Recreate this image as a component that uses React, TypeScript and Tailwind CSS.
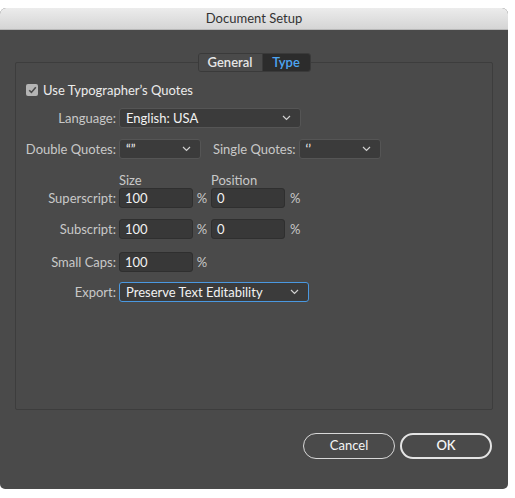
import React from "react";

function Chevron() {
  return (
    <svg width="9" height="6" viewBox="0 0 9 6" className="shrink-0">
      <path d="M1 1l3.5 3.5L8 1" stroke="#d0d0d0" fill="none" strokeWidth="1.2" />
    </svg>
  );
}

function Select({
  value,
  className,
  focused,
}: {
  value: string;
  className: string;
  focused?: boolean;
}) {
  return (
    <div
      className={`flex h-[20px] items-center justify-between rounded-[3px] border bg-[#3b3b3b] pl-[6px] pr-[9px] text-[13px] text-[#f2f2f2] ${
        focused ? "border-[#4a98e0]" : "border-[#555555]"
      } ${className}`}
    >
      <span>{value}</span>
      <Chevron />
    </div>
  );
}

function Field({ value }: { value: string }) {
  return (
    <div className="flex h-[20px] w-[74px] items-center rounded-[3px] border border-[#2f2f2f] bg-[#383838] pl-[5px] text-[13px] text-[#f2f2f2]">
      {value}
    </div>
  );
}

function Label({ children }: { children: React.ReactNode }) {
  return <div className="w-[100px] shrink-0 text-right text-[13px] text-[#c8c8c8]">{children}</div>;
}

function Pct({ className = "" }: { className?: string }) {
  return <span className={`text-[13px] text-[#c8c8c8] ${className}`}>%</span>;
}

export default function App() {
  return (
    <div className="h-[498px] w-[515px] bg-white pt-[8px] font-[Lato,'Open_Sans',sans-serif]">
      <div className="flex h-[481px] w-[508px] flex-col overflow-hidden rounded-t-[6px] rounded-b-[5px] bg-[#4a4a4a]">
        <div className="flex h-[22px] items-center justify-center border-b border-[#b8b8b8] bg-gradient-to-b from-[#ececec] to-[#d5d5d5] text-[13px] text-[#333333]">
          Document Setup
        </div>

        <div className="relative z-10 mt-[23px] flex justify-center">
          <div className="flex h-[19px] overflow-hidden rounded-[3px] border border-[#3a3a3a] text-[13px]">
            <div className="flex w-[64px] items-center justify-center border-r border-[#3a3a3a] bg-[#4a4a4a] font-semibold text-[#e6e6e6]">
              General
            </div>
            <div className="flex w-[47px] items-center justify-center bg-[#2c2c2c] font-semibold text-[#4da6f2]">
              Type
            </div>
          </div>
        </div>

        <div className="mx-[15px] -mt-[10px] h-[348px] rounded-[2px] border border-[#3d3d3d] pt-[17px] leading-[20px]">
          <div className="flex h-[20px] items-center gap-[5px] pl-[10px] text-[13px] text-[#ececec]">
            <div className="flex h-[12px] w-[12px] items-center justify-center rounded-[2px] bg-[#b4b4b4]">
              <svg width="9" height="8" viewBox="0 0 9 8">
                <path d="M1.2 4.2l2.2 2.2L7.8 1.2" stroke="#4a4a4a" strokeWidth="1.6" fill="none" />
              </svg>
            </div>
            <span>Use Typographer’s Quotes</span>
          </div>

          <div className="mt-[8px] flex h-[20px] items-center gap-[3px]">
            <Label>Language:</Label>
            <Select value="English: USA" className="w-[182px]" />
          </div>

          <div className="mt-[11px] flex h-[20px] items-center gap-[3px]">
            <Label>Double Quotes:</Label>
            <Select value="“”" className="w-[82px]" />
            <div className="ml-[9px] text-[13px] text-[#c8c8c8]">Single Quotes:</div>
            <Select value="‘’" className="w-[82px]" />
          </div>

          <div className="mt-[13px] flex h-[16px] items-center text-[13px] text-[#c8c8c8]">
            <div className="ml-[103px] w-[92px]">Size</div>
            <div>Position</div>
          </div>

          <div className="flex h-[20px] items-center gap-[3px]">
            <Label>Superscript:</Label>
            <Field value="100" />
            <Pct className="w-[12px] text-center" />
            <Field value="0" />
            <Pct className="ml-[2px]" />
          </div>

          <div className="mt-[11px] flex h-[20px] items-center gap-[3px]">
            <Label>Subscript:</Label>
            <Field value="100" />
            <Pct className="w-[12px] text-center" />
            <Field value="0" />
            <Pct className="ml-[2px]" />
          </div>

          <div className="mt-[13px] flex h-[20px] items-center gap-[3px]">
            <Label>Small Caps:</Label>
            <Field value="100" />
            <Pct className="w-[12px] text-center" />
          </div>

          <div className="mt-[10px] flex h-[20px] items-center gap-[3px]">
            <Label>Export:</Label>
            <Select value="Preserve Text Editability" className="w-[190px]" focused />
          </div>
        </div>

        <div className="mr-[16px] mt-[23px] flex justify-end gap-[5px] text-[13px] text-[#f5f5f5]">
          <button className="flex h-[26px] w-[92px] items-center justify-center rounded-full border border-[#d8d8d8]">
            Cancel
          </button>
          <button className="flex h-[26px] w-[92px] items-center justify-center rounded-full border-2 border-[#e4e4e4] font-semibold">
            OK
          </button>
        </div>
      </div>
    </div>
  );
}
